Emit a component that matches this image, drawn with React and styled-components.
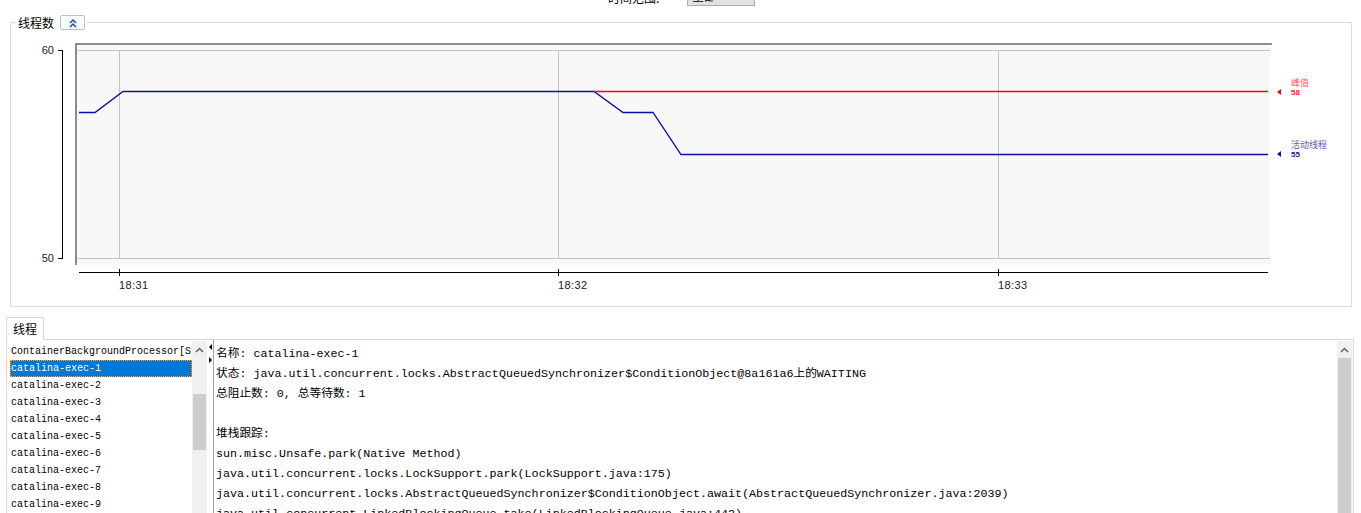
import React from "react";
import styled, { createGlobalStyle, css } from "styled-components";

const GlobalStyle = createGlobalStyle`
  html, body { margin: 0; padding: 0; background: #fff; }
  body { font-family: "Noto Sans CJK SC", "Liberation Sans", sans-serif; color: #000; }
`;

const Page = styled.div`
  width: 1361px;
  height: 513px;
  overflow: hidden;
  background: #fff;
`;

const TopBar = styled.div`
  height: 6px;
  overflow: hidden;
  display: flex;
  align-items: flex-end;
  padding-left: 608px;
`;

const TopLabel = styled.span`
  width: 62px;
  margin-right: 17px;
  font-size: 12px;
  line-height: 16px;
  white-space: nowrap;
`;

const Select = styled.div`
  width: 68px;
  height: 20px;
  box-sizing: border-box;
  border: 1px solid #adadad;
  background: #e1e1e1;
  font-size: 12px;
  line-height: 18px;
  padding-left: 4px;
`;

const Group = styled.fieldset`
  margin: 9px 0 0 10px;
  width: 1342px;
  box-sizing: border-box;
  padding: 0;
  min-width: 0;
  border: 1px solid #dcdcdc;
`;

const Legend = styled.legend`
  margin-left: 5px;
  padding: 0 2px;
  height: 15px;
  display: flex;
  align-items: center;
  gap: 6px;
  font-size: 12px;
  line-height: 15px;
`;

const CollapseButton = styled.div`
  width: 25px;
  height: 15px;
  box-sizing: border-box;
  border: 1px solid #b4c2dc;
  border-radius: 2px;
  background: #fbfcfe;
  display: flex;
  align-items: center;
  justify-content: center;
`;

const ChartSvg = styled.svg`
  display: block;
  width: 1340px;
  height: 276px;
`;

const TabArea = styled.div`
  margin: 10px 0 0 6px;
`;

const TabStrip = styled.div`
  display: flex;
  height: 22px;
`;

const Tab = styled.div`
  position: relative;
  z-index: 1;
  height: 23px;
  box-sizing: border-box;
  border: 1px solid #d9d9d9;
  border-bottom: none;
  background: #fff;
  padding: 0 6px;
  font-size: 12px;
  line-height: 22px;
`;

const TabPanel = styled.div`
  display: flex;
  width: 1348px;
  height: 200px;
  box-sizing: border-box;
  border: 1px solid #d9d9d9;
  border-bottom: none;
`;

const ListPane = styled.div`
  display: flex;
  width: 201px;
  padding-left: 3px;
  box-sizing: border-box;
`;

const ListRows = styled.div`
  width: 182px;
  padding-top: 3px;
  overflow: hidden;
  font-family: "Liberation Mono", monospace;
  font-size: 10px;
`;

const Row = styled.div`
  height: 17px;
  line-height: 18px;
  padding-left: 1px;
  white-space: nowrap;
  overflow: hidden;
  box-sizing: border-box;
  ${(p) =>
    p.$selected &&
    css`
      background: #0078d7;
      color: #fff;
      outline: 1px dotted #f0a848;
      outline-offset: -1px;
    `}
`;

const ScrollBar = styled.div`
  width: 15px;
  margin-top: 1px;
  background: #f0f0f0;
  display: flex;
  flex-direction: column;
`;

const ScrollArrow = styled.div`
  height: 17px;
  flex: none;
  display: flex;
  align-items: center;
  justify-content: center;
`;

const ScrollThumb = styled.div`
  margin: ${(p) => p.$offset}px 1px 0;
  background: #cdcdcd;
  ${(p) => (p.$size ? css`height: ${p.$size}px;` : css`flex: 1;`)}
`;

const Splitter = styled.div`
  width: 5px;
  display: flex;
  flex-direction: column;
  gap: 7px;
  padding: 4px 0 0 1px;
  box-sizing: border-box;
`;

const SplitArrow = styled.div`
  width: 0;
  height: 0;
  border-top: 3px solid transparent;
  border-bottom: 3px solid transparent;
  ${(p) =>
    p.$dir === "left"
      ? css`border-right: 3px solid #000;`
      : css`border-left: 3px solid #000;`}
`;

const TextPane = styled.div`
  flex: 1;
  min-width: 0;
  display: flex;
  border-left: 1px solid #a0a0a0;
`;

const TextBody = styled.div`
  flex: 1;
  min-width: 0;
  padding: 4px 0 0 2px;
  overflow: hidden;
  font-family: "Liberation Mono", "Noto Sans CJK SC", monospace;
  font-size: 11.7px;
  line-height: 20px;
  white-space: pre;
`;

const TextScroll = styled(ScrollBar)`
  margin-right: 1px;
`;

const UpChevron = () => (
  <svg width="9" height="6" viewBox="0 0 9 6">
    <polyline points="1,5 4.5,1.5 8,5" fill="none" stroke="#606060" strokeWidth="1.5" />
  </svg>
);

const DoubleUp = () => (
  <svg width="10" height="10" viewBox="0 0 10 10">
    <polyline points="2,5 5,2 8,5" fill="none" stroke="#1e4fa8" strokeWidth="1.5" />
    <polyline points="2,9 5,6 8,9" fill="none" stroke="#1e4fa8" strokeWidth="1.5" />
  </svg>
);

const blueLine = "79,112.5 95,112.5 123,91.5 594,91.5 623,112.5 653,112.5 681,154.5 1268,154.5";

const Chart = () => (
  <ChartSvg viewBox="0 0 1340 276">
    <g transform="translate(-11,-30)" fontFamily="'Liberation Sans', sans-serif">
      <rect x="75" y="43" width="1197" height="2" fill="#8c8c8c" />
      <rect x="75" y="43" width="2" height="222" fill="#8c8c8c" />
      <rect x="77" y="45" width="1193" height="220" fill="#f8f8f8" />
      <g stroke="#c4c4c4" strokeWidth="1">
        <line x1="77" y1="50.5" x2="1270" y2="50.5" />
        <line x1="77" y1="258.5" x2="1270" y2="258.5" />
        <line x1="119.5" y1="50" x2="119.5" y2="258" />
        <line x1="558.5" y1="50" x2="558.5" y2="258" />
        <line x1="998.5" y1="50" x2="998.5" y2="258" />
      </g>
      <g stroke="#000" strokeWidth="1">
        <line x1="62.5" y1="50" x2="62.5" y2="259" />
        <line x1="58" y1="50.5" x2="63" y2="50.5" />
        <line x1="58" y1="258.5" x2="63" y2="258.5" />
      </g>
      <g fontSize="11" fill="#222" textAnchor="end">
        <text x="54" y="54">60</text>
        <text x="54" y="262">50</text>
      </g>
      <g stroke="#000" strokeWidth="1">
        <line x1="79" y1="272.5" x2="1268" y2="272.5" />
        <line x1="119.5" y1="269" x2="119.5" y2="276" />
        <line x1="558.5" y1="269" x2="558.5" y2="276" />
        <line x1="998.5" y1="269" x2="998.5" y2="276" />
      </g>
      <g fontSize="11" fill="#222" letterSpacing="0.4">
        <text x="119" y="289">18:31</text>
        <text x="558" y="289">18:32</text>
        <text x="998" y="289">18:33</text>
      </g>
      <polyline points={blueLine} fill="none" stroke="#0a0ab0" strokeWidth="1.3" />
      <polyline points="594,91.5 1268,91.5" fill="none" stroke="#ff0000" strokeWidth="1.3" />
      <polygon points="1277,92 1281,89 1281,95" fill="#ff0000" />
      <polygon points="1277,154 1281,151 1281,157" fill="#0a0ab0" />
      <g fontFamily="'Noto Sans CJK SC', sans-serif" fontSize="9">
        <text x="1291" y="85.5" fill="#ff5a5a">峰值</text>
        <text x="1291" y="147.5" fill="#5a5ac0">活动线程</text>
      </g>
      <g fontSize="8" fontWeight="bold">
        <text x="1291" y="95" fill="#ff2020">58</text>
        <text x="1291" y="157" fill="#2020a0">55</text>
      </g>
    </g>
  </ChartSvg>
);

const threads = [
  "ContainerBackgroundProcessor[StandardEngine[Catalina]]",
  "catalina-exec-1",
  "catalina-exec-2",
  "catalina-exec-3",
  "catalina-exec-4",
  "catalina-exec-5",
  "catalina-exec-6",
  "catalina-exec-7",
  "catalina-exec-8",
  "catalina-exec-9",
  "catalina-exec-10",
];

const detail = [
  "名称: catalina-exec-1",
  "状态: java.util.concurrent.locks.AbstractQueuedSynchronizer$ConditionObject@8a161a6上的WAITING",
  "总阻止数: 0, 总等待数: 1",
  " ",
  "堆栈跟踪: ",
  "sun.misc.Unsafe.park(Native Method)",
  "java.util.concurrent.locks.LockSupport.park(LockSupport.java:175)",
  "java.util.concurrent.locks.AbstractQueuedSynchronizer$ConditionObject.await(AbstractQueuedSynchronizer.java:2039)",
  "java.util.concurrent.LinkedBlockingQueue.take(LinkedBlockingQueue.java:442)",
  "org.apache.tomcat.util.threads.TaskQueue.take(TaskQueue.java:103)",
];

export default function App() {
  return (
    <Page>
      <GlobalStyle />
      <TopBar>
        <TopLabel>时间范围:</TopLabel>
        <Select>全部</Select>
      </TopBar>
      <Group>
        <Legend>
          <span>线程数</span>
          <CollapseButton>
            <DoubleUp />
          </CollapseButton>
        </Legend>
        <Chart />
      </Group>
      <TabArea>
        <TabStrip>
          <Tab>线程</Tab>
        </TabStrip>
        <TabPanel>
          <ListPane>
            <ListRows>
              {threads.map((t, i) => (
                <Row key={t} $selected={i === 1}>
                  {t}
                </Row>
              ))}
            </ListRows>
            <ScrollBar>
              <ScrollArrow>
                <UpChevron />
              </ScrollArrow>
              <ScrollThumb $offset={36} $size={56} />
            </ScrollBar>
          </ListPane>
          <Splitter>
            <SplitArrow $dir="left" />
            <SplitArrow $dir="right" />
          </Splitter>
          <TextPane>
            <TextBody>
              {detail.map((l, i) => (
                <div key={i}>{l}</div>
              ))}
            </TextBody>
            <TextScroll>
              <ScrollArrow>
                <UpChevron />
              </ScrollArrow>
              <ScrollThumb $offset={0} />
            </TextScroll>
          </TextPane>
        </TabPanel>
      </TabArea>
    </Page>
  );
}
